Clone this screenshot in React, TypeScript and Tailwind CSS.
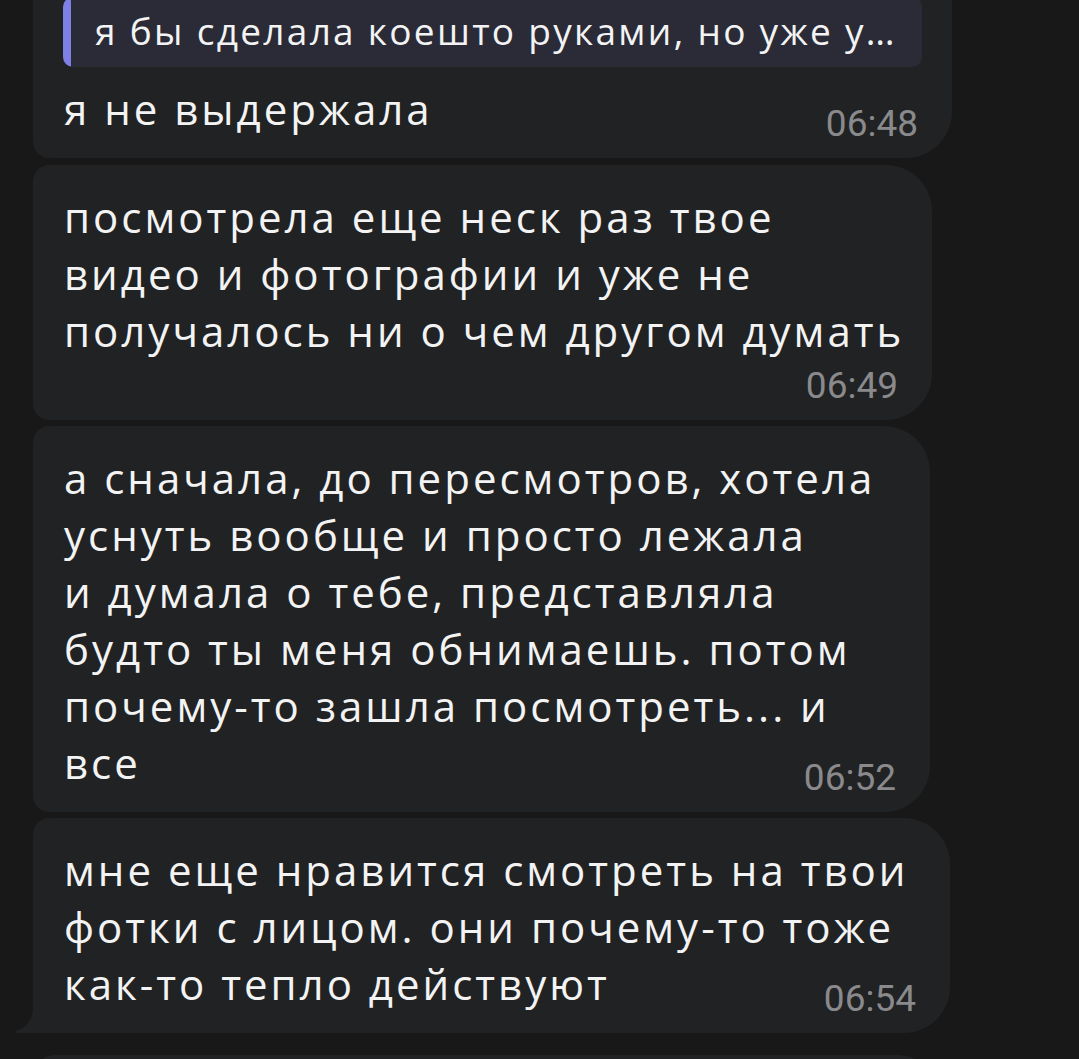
import React from "react";

type Message = {
  lines: string[];
  time: string;
  width: string;
  // time sits on the last text line, or drops to its own line
  inlineTime: boolean;
  tail?: boolean;
};

const messages: Message[] = [
  {
    lines: ["посмотрела еще неск раз твое", "видео и фотографии и уже не", "получалось ни о чем другом думать"],
    time: "06:49",
    width: "w-[899px]",
    inlineTime: false,
  },
  {
    lines: [
      "а сначала, до пересмотров, хотела",
      "уснуть вообще и просто лежала",
      "и думала о тебе, представляла",
      "будто ты меня обнимаешь. потом",
      "почему-то зашла посмотреть... и",
      "все",
    ],
    time: "06:52",
    width: "w-[897px]",
    inlineTime: true,
  },
  {
    lines: ["мне еще нравится смотреть на твои", "фотки с лицом. они почему-то тоже", "как-то тепло действуют"],
    time: "06:54",
    width: "w-[917px]",
    inlineTime: true,
    tail: true,
  },
];

const bodyFont = { fontFamily: "'Open Sans', 'Noto Sans', sans-serif" };
const timeFont = { fontFamily: "Roboto, 'Noto Sans', sans-serif" };

function Time({ value, inline }: { value: string; inline: boolean }) {
  return (
    <div
      style={timeFont}
      className={`self-end text-[37px] leading-none text-[#8a8a8d] ${inline ? "-mt-[32px]" : "mt-[8px]"}`}
    >
      {value}
    </div>
  );
}

function Bubble({ msg }: { msg: Message }) {
  return (
    <div
      className={`relative flex flex-col bg-[#212224] pt-[23px] pl-[31px] pr-[34px] pb-[16px] ${msg.width} rounded-tl-[16px] rounded-tr-[46px] rounded-br-[46px] ${
        msg.tail ? "rounded-bl-none" : "rounded-bl-[16px]"
      }`}
    >
      <div style={bodyFont} className="text-[42px] leading-[57px] tracking-[3px] text-[#f3f3f3] whitespace-nowrap">
        {msg.lines.map((l, i) => (
          <div key={i}>{l}</div>
        ))}
      </div>
      <Time value={msg.time} inline={msg.inlineTime} />
      {msg.tail && (
        <svg className="absolute -left-[18px] bottom-0" width="18" height="26" viewBox="0 0 18 26">
          <path d="M18 0 C18 12 12 20 2 23.5 C0 24.2 0 26 2 26 L18 26 Z" fill="#212224" />
        </svg>
      )}
    </div>
  );
}

export default function App() {
  return (
    <div className="h-[1059px] w-[1079px] overflow-hidden bg-[#181818]">
      <div className="-mt-[13px] flex flex-col pl-[33px]">
        {/* first bubble, cut at the top, with a reply quote */}
        <div className="flex w-[919px] flex-col bg-[#212224] pt-[10px] pl-[31px] pr-[34px] pb-[16px] rounded-bl-[16px] rounded-br-[46px]">
          <div className="flex h-[70px] w-[859px] overflow-hidden rounded-[10px] bg-[#2a2b37] -ml-[1px]">
            <div className="w-[8px] shrink-0 bg-[#7d81e6]" />
            <div
              style={bodyFont}
              className="truncate pl-[24px] pr-[12px] pt-[10px] text-[37px] leading-[48px] tracking-[2.3px] text-[#f3f3f3]"
            >
              я бы сделала коешто руками, но уже у…
            </div>
          </div>
          <div style={bodyFont} className="mt-[13px] text-[42px] leading-[57px] tracking-[3px] text-[#f3f3f3]">
            я не выдержала
          </div>
          <Time value="06:48" inline />
        </div>

        <div className="mt-[7px] flex flex-col gap-[6px]">
          {messages.map((m) => (
            <Bubble key={m.time} msg={m} />
          ))}
        </div>

        {/* next message, only its top edge is on screen */}
        <div className="mt-[22px] h-[120px] w-[910px] shrink-0 rounded-tl-[22px] rounded-tr-[46px] bg-[#212224]" />
      </div>
    </div>
  );
}
